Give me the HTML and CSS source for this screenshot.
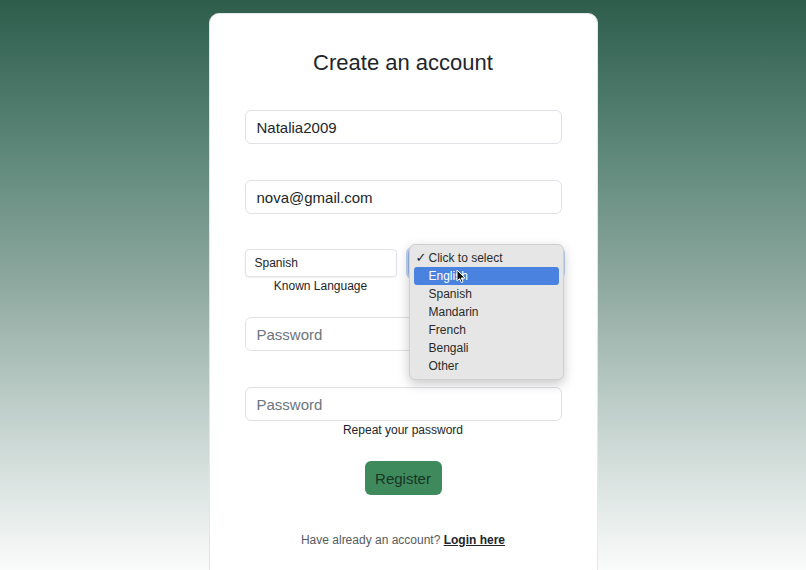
FILE: index.html
```html
<!DOCTYPE html>
<html lang="en">
<head>
<meta charset="utf-8">
<title>Create an account</title>
<link rel="stylesheet" href="styles.css">
</head>
<body>
<main class="card">
  <h1 class="title">Create an account</h1>
  <div class="field first"><div class="input">Natalia2009</div></div>
  <div class="field gap"><div class="input">nova@gmail.com</div></div>
  <div class="lang-row">
    <div class="lang-col">
      <div class="select">Spanish</div>
      <div class="hint">Known Language</div>
    </div>
    <div class="lang-col">
      <div class="select focus-select">
        <div class="popup">
          <div class="opt checked"><span class="check">✓</span>Click to select</div>
          <div class="opt active">English</div>
          <div class="opt">Spanish</div>
          <div class="opt">Mandarin</div>
          <div class="opt">French</div>
          <div class="opt">Bengali</div>
          <div class="opt">Other</div>
          <svg class="cursor" width="11" height="15" viewBox="0 0 11 15"><path d="M1 1 L1 12 L3.6 9.6 L5.4 13.6 L7 12.9 L5.3 9 L9 9 Z" fill="#111" stroke="#fff" stroke-width="1"/></svg>
        </div>
      </div>
    </div>
  </div>
  <div class="field pw1"><div class="input placeholder">Password</div></div>
  <div class="field gap"><div class="input placeholder">Password</div>
    <div class="hint">Repeat your password</div></div>
  <div class="actions"><button class="btn">Register</button></div>
  <p class="footer">Have already an account? <a class="login" href="#">Login here</a></p>
</main>
</body>
</html>
```
FILE: styles.css
```css
* { box-sizing: border-box; }
html, body { margin: 0; height: 570px; overflow: hidden; }
body {
  background: linear-gradient(180deg, #2e5d4c 0%, #5a8577 25%, #8fa9a0 50%, #c6d4d0 75%, #fafbfb 100%);
  font-family: "Liberation Sans", Arial, sans-serif;
  color: #212529;
}
.card {
  width: 389px;
  margin: 13px auto 0;
  height: 580px;
  background: #fff;
  border-radius: 10px;
  border: 1px solid #e3e6e8;
  padding: 35px 35px 0;
  display: flex;
  flex-direction: column;
}
.title {
  margin: 0;
  font-size: 22px;
  line-height: 28px;
  font-weight: 500;
  text-align: center;
  color: #212529;
}
.field.first { margin-top: 33px; }
.field.gap { margin-top: 36px; }
.input {
  height: 34px;
  border: 1px solid #dee2e6;
  border-radius: 6px;
  padding: 0 11px;
  display: flex;
  align-items: center;
  font-size: 15px;
  color: #212529;
  background: #fff;
}
.input.placeholder { color: #6c757d; }
.lang-row {
  margin-top: 35px;
  display: grid;
  grid-template-columns: 152px 155px;
  column-gap: 11px;
}
.lang-col { display: flex; flex-direction: column; }
.select {
  height: 28px;
  border: 1px solid #dee2e6;
  border-radius: 4px;
  padding: 0 9px;
  display: flex;
  align-items: center;
  font-size: 12px;
  color: #212529;
  background: #fff;
  box-shadow: 0 1px 2px rgba(0,0,0,0.06);
}
.focus-select {
  position: relative;
  border-color: #9ab7e8;
  box-shadow: 0 0 0 2px rgba(120,160,230,0.45);
}
.hint {
  font-size: 12px;
  line-height: 16px;
  text-align: center;
  margin-top: 1px;
  color: #212529;
}
.popup {
  position: absolute;
  left: 0;
  top: -6px;
  width: 155px;
  padding: 4px 4px;
  background: #e6e6e6;
  border: 1px solid #cfcfcf;
  border-radius: 6px;
  box-shadow: 0 4px 12px rgba(0,0,0,0.22);
  z-index: 5;
}
.opt {
  height: 18px;
  line-height: 18px;
  font-size: 12px;
  padding-left: 15px;
  color: #2a2a2a;
  border-radius: 3px;
  position: relative;
}
.opt .check {
  position: absolute;
  left: 2px;
  top: 0;
  font-size: 13px;
  font-weight: 700;
  font-family: "DejaVu Sans", sans-serif;
}
.opt.active {
  background: #4a82e0;
  color: #fff;
}
.cursor {
  position: absolute;
  left: 46px;
  top: 24px;
}
.field.pw1 { margin-top: 23px; }
.actions {
  margin-top: 23px;
  display: flex;
  justify-content: center;
}
.btn {
  width: 77px;
  height: 34px;
  border: none;
  border-radius: 6px;
  background: #3f8a5d;
  color: #173524;
  font-family: "Liberation Sans", Arial, sans-serif;
  font-size: 15px;
  padding: 0;
}
.footer {
  margin: 38px 0 0;
  text-align: center;
  font-size: 12px;
  color: #555b60;
}
.login {
  color: #212529;
  font-weight: 700;
  text-decoration: underline;
}
```
